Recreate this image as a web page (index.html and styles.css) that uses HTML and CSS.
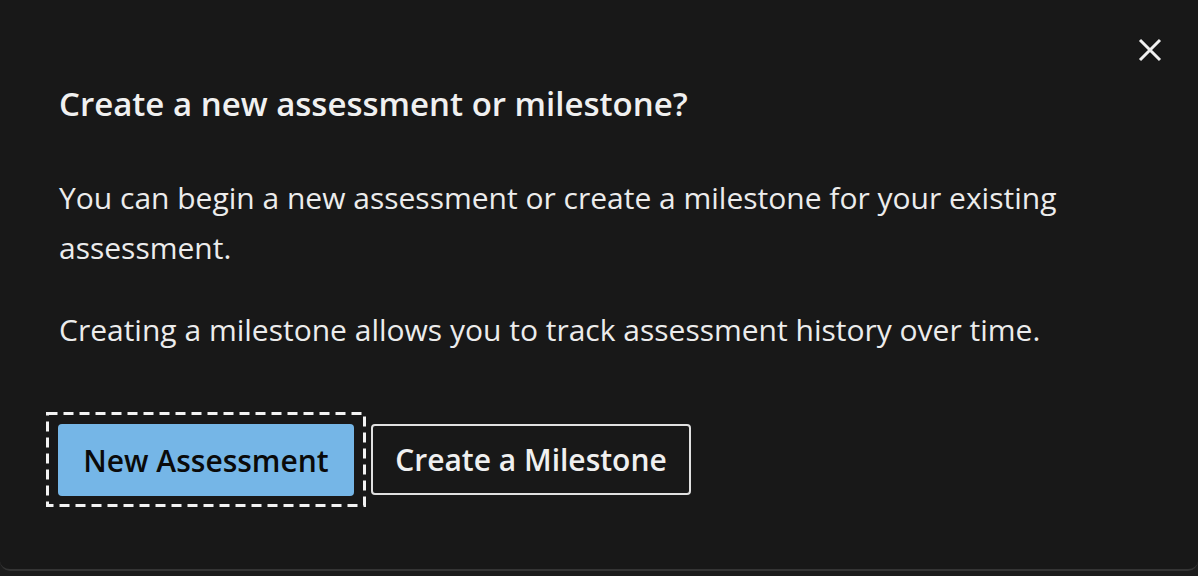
FILE: index.html
```html
<!DOCTYPE html>
<html lang="en">
<head>
    <meta charset="UTF-8">
    <meta name="viewport" content="width=device-width, initial-scale=1.0">
    <title>Create a new assessment or milestone?</title>
    <link rel="stylesheet" href="styles.css">
</head>
<body>
    <div class="dialog">
        <button class="close-btn" aria-label="Close">
            <svg width="24" height="24" viewBox="0 0 24 24">
                <path d="M2 2 L22 22 M22 2 L2 22" stroke="#f2f2f2" stroke-width="3" fill="none"/>
            </svg>
        </button>
        <h2 class="dialog-title">Create a new assessment or milestone?</h2>
        <div class="dialog-body">
            <p>You can begin a new assessment or create a milestone for your existing assessment.</p>
            <p>Creating a milestone allows you to track assessment history over time.</p>
        </div>
        <div class="button-group">
            <div class="focus-ring">
                <!-- dashed keyboard focus outline -->
                <svg class="focus-outline" width="320" height="95" viewBox="0 0 320 95">
                    <rect x="1.5" y="1.5" width="317" height="92" fill="none" stroke="#f2f2f2" stroke-width="3" stroke-dasharray="10 6"/>
                </svg>
                <button class="btn btn-primary">New Assessment</button>
            </div>
            <button class="btn btn-secondary">Create a Milestone</button>
        </div>
    </div>
</body>
</html>
```

FILE: styles.css
```css
body {
    margin: 0;
    padding: 0;
    background-color: #1c1c1c;
    font-family: "Open Sans", "Noto Sans", sans-serif;
    color: #f0f0f0;
}
.dialog {
    position: relative;
    box-sizing: border-box;
    width: 1198px;
    height: 571px;
    background-color: #181818;
    border-bottom: 2px solid #343434;
    border-radius: 0 0 10px 10px;
    padding: 78px 59px 0 59px;
}
.close-btn {
    position: absolute;
    top: 38px;
    right: 36px;
    width: 24px;
    height: 24px;
    padding: 0;
    border: none;
    background: none;
    cursor: pointer;
}
.close-btn svg {
    display: block;
}
.dialog-title {
    margin: 0;
    font-size: 33px;
    font-weight: 600;
    line-height: 52px;
    color: #f0f0f0;
}
.dialog-body {
    margin-top: 43px;
}
.dialog-body p {
    margin: 0 0 32px 0;
    font-size: 30px;
    line-height: 50px;
    max-width: 1060px;
    color: #ececec;
}
.button-group {
    display: flex;
    align-items: flex-start;
    gap: 5px;
    margin-top: 57px;
    margin-left: -13px;
}
.focus-ring {
    position: relative;
    width: 320px;
    height: 95px;
    box-sizing: border-box;
    padding: 12px;
}
.focus-outline {
    position: absolute;
    top: 0;
    left: 0;
}
.btn {
    font-family: inherit;
    font-size: 30px;
    font-weight: 600;
    height: 72px;
    border-radius: 4px;
    cursor: pointer;
    display: block;
    padding: 0;
}
.btn-primary {
    width: 296px;
    background-color: #75b6e7;
    color: #0a0a0a;
    border: none;
}
.btn-secondary {
    width: 320px;
    height: 71px;
    margin-top: 12px;
    background-color: transparent;
    color: #f0f0f0;
    border: 2px solid #e0e0e0;
}
```
